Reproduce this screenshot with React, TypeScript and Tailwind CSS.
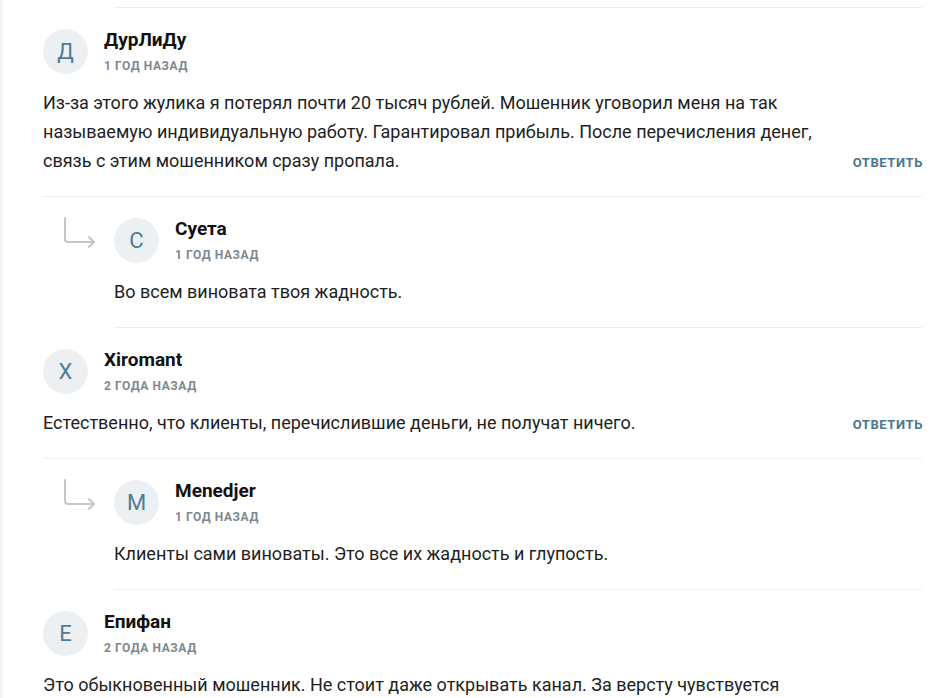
import React from 'react';

type Comment = {
  id: number;
  author: string;
  date: string;
  text: string;
  reply?: boolean;
  canAnswer?: boolean;
};

const comments: Comment[] = [
  {
    id: 1,
    author: 'ДурЛиДу',
    date: '1 год назад',
    text: 'Из-за этого жулика я потерял почти 20 тысяч рублей. Мошенник уговорил меня на так называемую индивидуальную работу. Гарантировал прибыль. После перечисления денег, связь с этим мошенником сразу пропала.',
    canAnswer: true,
  },
  { id: 2, author: 'Суета', date: '1 год назад', text: 'Во всем виновата твоя жадность.', reply: true },
  {
    id: 3,
    author: 'Xiromant',
    date: '2 года назад',
    text: 'Естественно, что клиенты, перечислившие деньги, не получат ничего.',
    canAnswer: true,
  },
  {
    id: 4,
    author: 'Menedjer',
    date: '1 год назад',
    text: 'Клиенты сами виноваты. Это все их жадность и глупость.',
    reply: true,
  },
  {
    id: 5,
    author: 'Епифан',
    date: '2 года назад',
    text: 'Это обыкновенный мошенник. Не стоит даже открывать канал. За версту чувствуется подвох, а обещания слишком красивые, чтобы быть правдой.',
    canAnswer: true,
  },
];

function ReplyArrow() {
  return (
    <svg width="34" height="32" viewBox="0 0 34 32" fill="none" className="text-[#c3c7cb]">
      <path
        d="M2 1v21a3 3 0 0 0 3 3h26"
        stroke="currentColor"
        strokeWidth="2"
        strokeLinecap="round"
      />
      <path
        d="M26 20l5 5-5 5"
        stroke="currentColor"
        strokeWidth="2"
        strokeLinecap="round"
        strokeLinejoin="round"
      />
    </svg>
  );
}

function CommentItem({ c }: { c: Comment }) {
  return (
    <div className="flex">
      {c.reply && (
        <div className="w-[71px] shrink-0 pl-[20px] pt-[20px]">
          <ReplyArrow />
        </div>
      )}
      <div className="flex-1 border-b border-[#eceef0] pt-[21px] pb-[21px]">
        <div className="flex items-center gap-4">
          <div className="flex h-[45px] w-[45px] shrink-0 items-center justify-center rounded-full bg-[#edf0f3] text-[22px] text-[#4a7d99]">
            {c.author[0].toUpperCase()}
          </div>
          <div className="flex flex-col">
            <div className="text-[19px] font-bold leading-[22px] text-[#111]">{c.author}</div>
            <div className="mt-[7px] text-[12px] font-bold uppercase leading-[16px] tracking-[0.6px] text-[#7d8891]">
              {c.date}
            </div>
          </div>
        </div>
        <div className="mt-[14px] flex items-end gap-6">
          <p className="max-w-[790px] flex-1 text-[18px] leading-[29px] text-[#1e1e1e]">{c.text}</p>
          {c.canAnswer && (
            <button className="-mr-[1px] mb-[2px] shrink-0 text-[13px] font-bold uppercase leading-[20px] tracking-[0.6px] text-[#487590]">
              Ответить
            </button>
          )}
        </div>
      </div>
    </div>
  );
}

export default function App() {
  return (
    <div
      className="h-[698px] overflow-hidden border-l-[3px] border-[#f2f4f6] bg-white pl-[40px] pr-[26px]"
      style={{ fontFamily: 'Roboto, "Noto Sans", sans-serif' }}
    >
      <div className="flex">
        <div className="w-[71px] shrink-0" />
        <div className="h-[8px] flex-1 border-b border-[#eceef0]" />
      </div>
      {comments.map((c) => (
        <CommentItem key={c.id} c={c} />
      ))}
    </div>
  );
}
